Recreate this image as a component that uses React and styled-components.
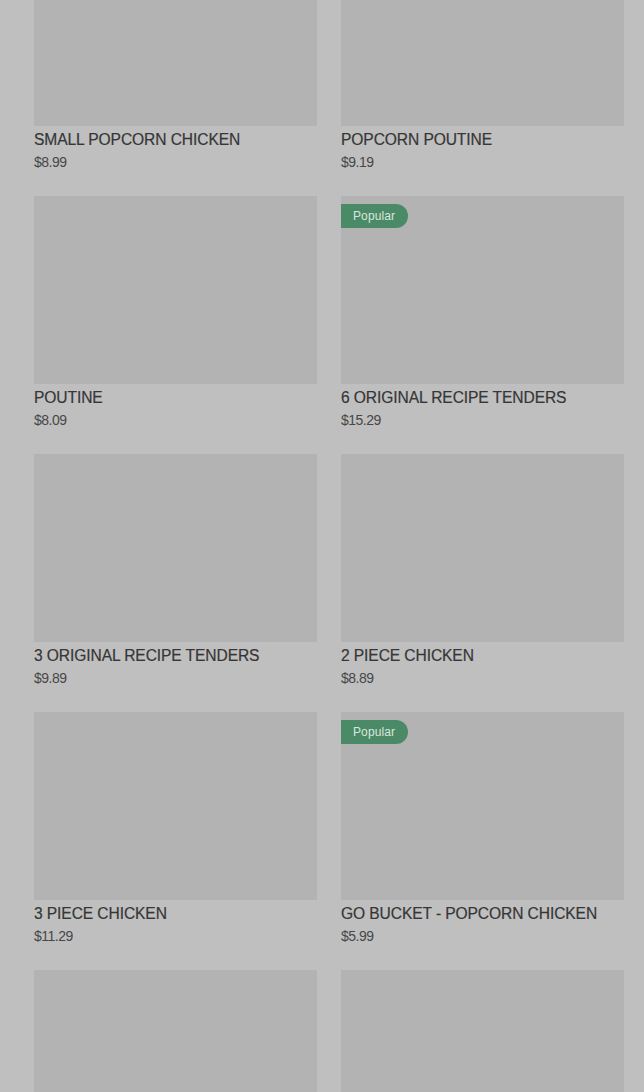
import React from "react";
import styled, { createGlobalStyle } from "styled-components";

const Global = createGlobalStyle`
  html, body {
    margin: 0;
    padding: 0;
    overflow: hidden;
    background: #bfbfbf;
  }
  body {
    font-family: "Liberation Sans", Arial, sans-serif;
  }
`;

const Page = styled.main`
  width: 644px;
  height: 1092px;
  overflow: hidden;
  background: #bfbfbf;
  box-sizing: border-box;
  padding: 0 20px 0 34px;
`;

const Grid = styled.div`
  display: grid;
  grid-template-columns: 283px 283px;
  column-gap: 24px;
  row-gap: 25px;
  margin-top: -62px;
`;

const Card = styled.article`
  display: flex;
  flex-direction: column;
`;

const Thumb = styled.div`
  position: relative;
  height: 188px;
  background: #b3b3b3;
`;

const Badge = styled.span`
  position: absolute;
  top: 8px;
  left: 0;
  height: 24px;
  padding: 0 13px 0 12px;
  display: flex;
  align-items: center;
  background: #4b8a66;
  color: #d9e6de;
  font-size: 12px;
  border-radius: 0 12px 12px 0;
  letter-spacing: 0.1px;
`;

const Title = styled.h3`
  margin: 4px 0 0;
  font-size: 15.6px;
  line-height: 20px;
  font-weight: 400;
  color: #363636;
  text-transform: uppercase;
  letter-spacing: -0.1px;
  white-space: nowrap;
  -webkit-text-stroke: 0.2px #363636;
`;

const Price = styled.div`
  margin-top: 3px;
  font-size: 14px;
  line-height: 18px;
  color: #474747;
  letter-spacing: -0.5px;
`;

const items = [
  { name: "Small Popcorn Chicken", price: "$8.99" },
  { name: "Popcorn Poutine", price: "$9.19" },
  { name: "Poutine", price: "$8.09" },
  { name: "6 Original Recipe Tenders", price: "$15.29", popular: true },
  { name: "3 Original Recipe Tenders", price: "$9.89" },
  { name: "2 Piece Chicken", price: "$8.89" },
  { name: "3 Piece Chicken", price: "$11.29" },
  { name: "Go Bucket - Popcorn Chicken", price: "$5.99", popular: true },
  { name: "", price: "" },
  { name: "", price: "" },
];

export default function App() {
  return (
    <>
      <Global />
      <Page>
        <Grid>
          {items.map((it, i) => (
            <Card key={i}>
              <Thumb>{it.popular && <Badge>Popular</Badge>}</Thumb>
              {it.name && <Title>{it.name}</Title>}
              {it.price && <Price>{it.price}</Price>}
            </Card>
          ))}
        </Grid>
      </Page>
    </>
  );
}
